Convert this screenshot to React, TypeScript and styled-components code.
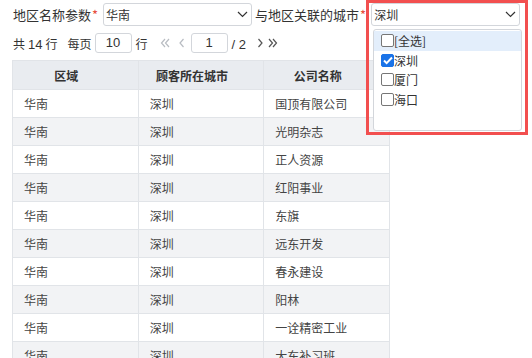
import React from "react";
import styled, { createGlobalStyle } from "styled-components";

const GlobalStyle = createGlobalStyle`
  html, body {
    margin: 0;
    padding: 0;
    background: #fff;
  }
  body {
    font-family: "Noto Sans CJK SC", "Noto Sans", sans-serif;
    color: #333;
  }
`;

const Page = styled.div`
  position: relative;
  width: 532px;
  height: 358px;
  overflow: hidden;
`;

const ParamBar = styled.div`
  display: flex;
  align-items: center;
  height: 23px;
  padding: 3px 0 0 13px;
  font-size: 13px;
`;

const Label = styled.span`
  white-space: nowrap;
  line-height: 23px;
`;

const Required = styled.span`
  color: #e74c3c;
  margin: 0 5px 0 1px;
`;

const SelectBox = styled.div<{ $width: number }>`
  box-sizing: border-box;
  display: flex;
  align-items: center;
  justify-content: space-between;
  width: ${(p) => p.$width}px;
  height: 23px;
  padding: 0 3px 0 2px;
  border: 1px solid #d3d6db;
  border-radius: 3px;
  font-size: 12px;
  color: #333;
  margin-right: 3px;
`;

const PagerBar = styled.div`
  display: flex;
  align-items: center;
  height: 20px;
  padding: 7px 0 0 13px;
  font-size: 12px;
  color: #333;
`;

const PagerText = styled.span<{ $gap?: number }>`
  white-space: nowrap;
  margin-right: ${(p) => p.$gap ?? 0}px;
`;

const PageInput = styled.div`
  box-sizing: border-box;
  width: 37px;
  height: 20px;
  border: 1px solid #d3d6db;
  border-radius: 3px;
  text-align: center;
  line-height: 18px;
  font-family: "Liberation Sans", Arial, sans-serif;
  font-size: 13px;
  margin-right: 4px;
`;

const NavIcon = styled.svg<{ $off?: boolean; $gap?: number }>`
  width: 10px;
  height: 12px;
  stroke: ${(p) => (p.$off ? "#b8bcc2" : "#555")};
  fill: none;
  stroke-width: 1.2;
  margin-right: ${(p) => p.$gap ?? 0}px;
`;

const Num = styled.span<{ $space?: number }>`
  font-family: "Liberation Sans", Arial, sans-serif;
  font-size: 13px;
  margin: 0 ${(p) => p.$space ?? 0}px;
`;

const Table = styled.table`
  margin: 7px 0 0 12px;
  border-collapse: collapse;
  table-layout: fixed;
  width: 378px;
  font-size: 12px;
`;

const HeadCell = styled.th`
  height: 28px;
  padding: 0 18px 0 0;
  background: #e9ecf0;
  border: 1px solid #e1e4e8;
  font-weight: bold;
  color: #333;
  text-align: center;
`;

const Row = styled.tr<{ $striped: boolean }>`
  background: ${(p) => (p.$striped ? "#f2f3f5" : "#fff")};
`;

const Cell = styled.td`
  box-sizing: border-box;
  height: 28px;
  padding: 0 0 0 11px;
  border: 1px solid #e1e4e8;
  color: #444;
  white-space: nowrap;
`;

const Highlight = styled.div`
  position: absolute;
  left: 366px;
  top: 0;
  width: 162px;
  height: 135px;
  box-sizing: border-box;
  border: 3px solid #f24f4f;
  pointer-events: none;
`;

const DropList = styled.div`
  position: absolute;
  left: 373px;
  top: 29px;
  width: 149px;
  height: 102px;
  box-sizing: border-box;
  border: 1px solid #d3d6db;
  border-radius: 3px;
  background: #fff;
  padding-top: 1px;
`;

const Option = styled.div<{ $active?: boolean }>`
  display: flex;
  align-items: center;
  height: 19.5px;
  padding-left: 7px;
  font-size: 12px;
  color: #333;
  background: ${(p) => (p.$active ? "#e3eefb" : "transparent")};
`;

const Box = styled.span<{ $checked?: boolean }>`
  box-sizing: border-box;
  display: inline-flex;
  align-items: center;
  justify-content: center;
  width: 13px;
  height: 13px;
  border: 1px solid ${(p) => (p.$checked ? "#1a73e8" : "#767676")};
  border-radius: 2px;
  background: ${(p) => (p.$checked ? "#1a73e8" : "#fff")};
`;

const Chevron = () => (
  <svg width="11" height="7" viewBox="0 0 11 7" fill="none" stroke="#333" strokeWidth="1.2">
    <path d="M1 1l4.5 4.5L10 1" />
  </svg>
);

const companies = [
  "国顶有限公司",
  "光明杂志",
  "正人资源",
  "红阳事业",
  "东旗",
  "远东开发",
  "春永建设",
  "阳林",
  "一诠精密工业",
  "大东补习班",
];

const cities = [
  { name: "[全选]", checked: false, active: true },
  { name: "深圳", checked: true },
  { name: "厦门", checked: false },
  { name: "海口", checked: false },
];

const App: React.FC = () => (
  <Page>
    <GlobalStyle />
    <ParamBar>
      <Label>
        地区名称参数<Required>*</Required>
      </Label>
      <SelectBox $width={149}>
        <span>华南</span>
        <Chevron />
      </SelectBox>
      <Label>
        与地区关联的城市<Required>*</Required>
      </Label>
      <SelectBox $width={149}>
        <span>深圳</span>
        <Chevron />
      </SelectBox>
    </ParamBar>

    <PagerBar>
      <PagerText $gap={10}>
        共<Num $space={3}>14</Num>行
      </PagerText>
      <PagerText $gap={3}>每页</PagerText>
      <PageInput>10</PageInput>
      <PagerText $gap={12}>行</PagerText>
      <NavIcon $off $gap={7} viewBox="0 0 10 12">
        <path d="M5 2L1.5 6 5 10M9 2L5.5 6 9 10" />
      </NavIcon>
      <NavIcon $off $gap={4} viewBox="0 0 10 12">
        <path d="M6.5 2L3 6l3.5 4" />
      </NavIcon>
      <PageInput>1</PageInput>
      <PagerText $gap={9}>
        <Num>/ 2</Num>
      </PagerText>
      <NavIcon $gap={3} viewBox="0 0 10 12">
        <path d="M3.5 2L7 6l-3.5 4" />
      </NavIcon>
      <NavIcon viewBox="0 0 10 12">
        <path d="M1 2l3.5 4L1 10M5 2l3.5 4L5 10" />
      </NavIcon>
    </PagerBar>

    <Table>
      <thead>
        <tr>
          <HeadCell>区域</HeadCell>
          <HeadCell>顾客所在城市</HeadCell>
          <HeadCell>公司名称</HeadCell>
        </tr>
      </thead>
      <tbody>
        {companies.map((c, i) => (
          <Row key={c} $striped={i % 2 === 1}>
            <Cell>华南</Cell>
            <Cell>深圳</Cell>
            <Cell>{c}</Cell>
          </Row>
        ))}
      </tbody>
    </Table>

    <DropList>
      {cities.map((c) => (
        <Option key={c.name} $active={c.active}>
          <Box $checked={c.checked}>
            {c.checked && (
              <svg width="10" height="9" viewBox="0 0 10 9" fill="none" stroke="#fff" strokeWidth="2">
                <path d="M1 4.5l2.6 2.6L9 1.5" />
              </svg>
            )}
          </Box>
          {c.name}
        </Option>
      ))}
    </DropList>
    <Highlight />
  </Page>
);

export default App;
